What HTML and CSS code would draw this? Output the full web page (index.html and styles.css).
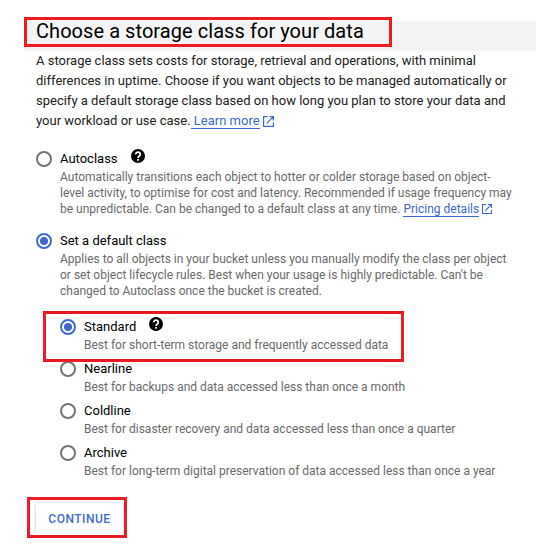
FILE: index.html
```html
<!DOCTYPE html>
<html lang="en">
<head>
  <meta charset="UTF-8">
  <meta name="viewport" content="width=device-width, initial-scale=1.0">
  <title>Choose a storage class</title>
  <link rel="stylesheet" href="styles.css">
</head>
<body>

  <div class="step">
    <div class="step-header marked">
      <h1>Choose a storage class for your data</h1>
      <span class="mark mark-title"></span>
    </div>

    <p class="intro">
      A storage class sets costs for storage, retrieval and operations, with minimal<br>
      differences in uptime. Choose if you want objects to be managed automatically or<br>
      specify a default storage class based on how long you plan to store your data and<br>
      your workload or use case.<a href="#" class="link">&nbsp;Learn more</a>
      <svg class="open-icon" viewBox="0 0 11 11"><path d="M4.5 .6H.6v9.8h9.8V6.5M6.5.6h3.9V4.5M10.2.8 3.6 7.4"/></svg>
    </p>

    <div class="option">
      <span class="radio"></span>
      <div class="option-body">
        <div class="label">Autoclass
          <svg class="help-icon" viewBox="0 0 14 14"><circle cx="7" cy="7" r="7"/><path d="M4.7 5.4a2.3 2.2 0 1 1 3.6 1.7C7.4 7.7 7 8 7 9M7 10v1.7"/></svg>
        </div>
        <p class="desc">
          Automatically transitions each object to hotter or colder storage based on object-<br>
          level activity, to optimise for cost and latency. Recommended if usage frequency may<br>
          be unpredictable. Can be changed to a default class at any time. <a href="#" class="link">Pricing details</a>
          <svg class="open-icon small" viewBox="0 0 11 11"><path d="M4.5 .6H.6v9.8h9.8V6.5M6.5.6h3.9V4.5M10.2.8 3.6 7.4"/></svg>
        </p>
      </div>
    </div>

    <div class="option">
      <span class="radio checked"></span>
      <div class="option-body">
        <div class="label">Set a default class</div>
        <p class="desc">
          Applies to all objects in your bucket unless you manually modify the class per object<br>
          or set object lifecycle rules. Best when your usage is highly predictable. Can't be<br>
          changed to Autoclass once the bucket is created.
        </p>

        <div class="classes">
          <div class="option marked">
            <span class="radio checked"></span>
            <div class="option-body">
              <div class="label">Standard
                <svg class="help-icon" viewBox="0 0 14 14"><circle cx="7" cy="7" r="7"/><path d="M4.7 5.4a2.3 2.2 0 1 1 3.6 1.7C7.4 7.7 7 8 7 9M7 10v1.7"/></svg>
              </div>
              <p class="desc">Best for short-term storage and frequently accessed data</p>
            </div>
            <span class="mark mark-standard"></span>
          </div>
          <div class="option">
            <span class="radio"></span>
            <div class="option-body">
              <div class="label">Nearline</div>
              <p class="desc">Best for backups and data accessed less than once a month</p>
            </div>
          </div>
          <div class="option">
            <span class="radio"></span>
            <div class="option-body">
              <div class="label">Coldline</div>
              <p class="desc">Best for disaster recovery and data accessed less than once a quarter</p>
            </div>
          </div>
          <div class="option">
            <span class="radio"></span>
            <div class="option-body">
              <div class="label">Archive</div>
              <p class="desc">Best for long-term digital preservation of data accessed less than once a year</p>
            </div>
          </div>
        </div>
      </div>
    </div>

    <div class="actions marked">
      <button class="continue">CONTINUE</button>
      <span class="mark mark-continue"></span>
    </div>
  </div>

</body>
</html>
```
FILE: styles.css
```css
body {
  font-family: Roboto, Arial, sans-serif;
  font-size: 13px;
  line-height: 20px;
  margin: 0;
  min-height: 100vh;
  background: #fff;
  color: #000;
}

.step {
  padding: 21px 3px 0 36px;
  white-space: nowrap;
}

.step-header {
  height: 30px;
  margin-left: -12px;
  padding-left: 12px;
  background: #f4f4f4;
}

h1 {
  margin: 0;
  font-size: 20px;
  font-weight: 400;
  line-height: 20px;
  letter-spacing: 0.06px;
}

p {
  margin: 0;
}

.intro {
  margin-bottom: 18px;
  color: #212121;
}

.link {
  color: #3f67d5;
  text-decoration: none;
  border-bottom: 1px solid #3f67d5;
}

.open-icon {
  width: 11px;
  height: 11px;
  vertical-align: -2px;
  fill: none;
  stroke: #3f67d5;
  stroke-width: 1.2;
}

.open-icon.small {
  width: 10px;
  height: 10px;
  vertical-align: -1px;
}

.option {
  display: flex;
  gap: 8px;
  margin-bottom: 14px;
}

.radio {
  flex: none;
  box-sizing: border-box;
  width: 16px;
  height: 16px;
  margin-top: 2px;
  border: 2px solid #757575;
  border-radius: 50%;
}

.radio.checked {
  border-color: #4169d6;
  background: radial-gradient(circle, #4169d6 3.7px, #fff 4.4px);
}

.label {
  display: flex;
  gap: 13px;
}

.help-icon {
  width: 14px;
  height: 14px;
}

.help-icon path {
  fill: none;
  stroke: #fff;
  stroke-width: 1.8;
}

.desc {
  font-size: 12px;
  line-height: 16px;
  color: #6a6a6a;
}

.classes {
  margin-top: 18px;
}

.classes .option {
  margin-bottom: 6px;
}

.actions {
  margin-top: 18px;
  width: 87px;
}

.continue {
  display: block;
  width: 87px;
  height: 32px;
  padding: 0;
  border: none;
  border-radius: 3px;
  background: #fff;
  box-shadow: 0 0 3px rgba(0, 0, 0, 0.25);
  color: #4169d6;
  font-family: inherit;
  font-size: 12px;
  font-weight: 500;
  letter-spacing: 0.5px;
}

/* red highlight frames */
.marked {
  position: relative;
}

.mark {
  position: absolute;
  box-sizing: border-box;
  border: 3px solid #ed1c24;
}

.mark-title {
  left: 0;
  top: -4px;
  width: 368px;
  height: 30px;
}

.mark-standard {
  left: -17px;
  top: -6px;
  width: 361px;
  height: 51px;
  z-index: 1;
}

.mark-continue {
  left: -9px;
  top: -6px;
  width: 100px;
  height: 41px;
}
```
